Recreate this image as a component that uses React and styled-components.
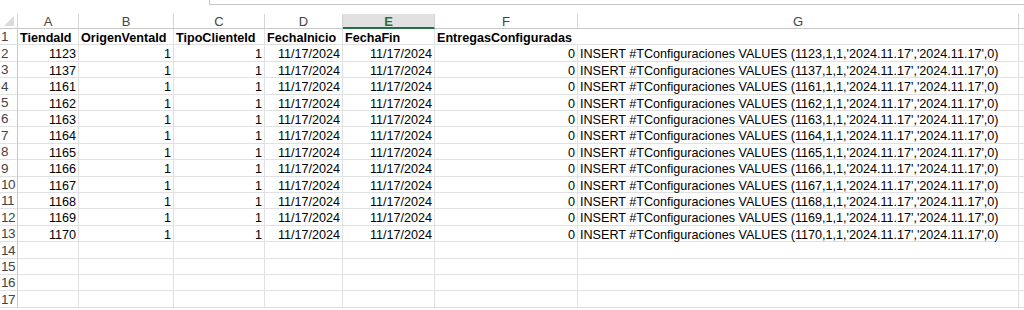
import React from 'react';
import styled, { createGlobalStyle } from 'styled-components';

/** Global styles. */

const GlobalStyle = createGlobalStyle`
	html, body {
		margin: 0;
		padding: 0;
		background: #fff;
		overflow: hidden;
	}
	body {
		font-family: 'Liberation Sans', Arial, sans-serif;
	}
`;

/** Sheet styles. */

const Sheet = styled.div`
	width: 1024px;
	height: 310px;
	overflow: hidden;
	background: #fff;
`;

const TopBar = styled.div`
	height: 14px;
	display: flex;
`;

const FormulaBox = styled.div`
	margin-left: 209px;
	flex: 1;
	height: 4px;
	border-left: 1px solid #c6c6c6;
	border-bottom: 1px solid #c6c6c6;
`;

const Row = styled.div`
	display: flex;
	height: ${props => props.h}px;
`;

const Corner = styled.div`
	position: relative;
	width: 18px;
	flex: none;
	box-sizing: border-box;
	border-right: 1px solid #d4d4d4;
	border-bottom: 1px solid #c8c8c8;

	&::after {
		content: '';
		position: absolute;
		right: 3px;
		bottom: 2px;
		width: 0;
		height: 0;
		border-left: 10px solid transparent;
		border-bottom: 10px solid #dcdcdc;
	}
`;

const ColHeader = styled.div`
	width: ${props => props.w}px;
	flex: none;
	box-sizing: border-box;
	display: flex;
	align-items: center;
	justify-content: center;
	font-size: 13px;
	line-height: 1;
	color: ${props => (props.active ? '#217346' : '#444')};
	font-weight: ${props => (props.active ? 700 : 400)};
	background: ${props => (props.active ? '#e1e1e1' : '#fff')};
	border-right: 1px solid #d4d4d4;
	border-bottom: ${props => (props.active ? '2px solid #217346' : '1px solid #c8c8c8')};
	padding-top: ${props => (props.active ? '1px' : '0')};
`;

const RowNum = styled.div`
	width: 18px;
	flex: none;
	box-sizing: border-box;
	display: flex;
	align-items: center;
	padding-left: 1px;
	font-size: 13.5px;
	color: #444;
	border-right: 1px solid #c8c8c8;
	border-bottom: 1px solid #e1e1e1;
	letter-spacing: -0.4px;
`;

const Cell = styled.div`
	width: ${props => props.w}px;
	flex: none;
	box-sizing: border-box;
	display: flex;
	align-items: center;
	justify-content: ${props => (props.right ? 'flex-end' : 'flex-start')};
	padding: 2px 2px 0 2px;
	font-size: 12.6px;
	font-weight: ${props => (props.bold ? 700 : 400)};
	color: #000;
	white-space: nowrap;
	overflow: visible;
	border-right: ${props => (props.spill ? '1px solid transparent' : '1px solid #e1e1e1')};
	border-bottom: 1px solid #e1e1e1;
`;

/** Data. */

const columns = [
	{ key: 'A', w: 61 },
	{ key: 'B', w: 95 },
	{ key: 'C', w: 91 },
	{ key: 'D', w: 78 },
	{ key: 'E', w: 92 },
	{ key: 'F', w: 143 },
	{ key: 'G', w: 441 },
	{ key: 'H', w: 80, blank: true },
];

const headers = [
	'TiendaId',
	'OrigenVentaId',
	'TipoClienteId',
	'FechaInicio',
	'FechaFin',
	'EntregasConfiguradas',
	'',
];

const tiendas = [1123, 1137, 1161, 1162, 1163, 1164, 1165, 1166, 1167, 1168, 1169, 1170];

const rowHeight = i => Math.round(29 + (i + 1) * 16.4) - Math.round(29 + i * 16.4);

function App() {
	return (
		<Sheet>
			<GlobalStyle />
			<TopBar>
				<FormulaBox />
			</TopBar>

			<Row h={15}>
				<Corner />
				{columns.map(col => (
					<ColHeader key={col.key} w={col.w} active={col.key === 'E'}>
						{col.blank ? '' : col.key}
					</ColHeader>
				))}
			</Row>

			<Row h={rowHeight(0)}>
				<RowNum>1</RowNum>
				{columns.map((col, c) => (
					<Cell key={col.key} w={col.w} bold spill={c === 5}>
						{headers[c] || ''}
					</Cell>
				))}
			</Row>

			{tiendas.map((id, i) => (
				<Row key={id} h={rowHeight(i + 1)}>
					<RowNum>{i + 2}</RowNum>
					<Cell w={61} right>{id}</Cell>
					<Cell w={95} right>1</Cell>
					<Cell w={91} right>1</Cell>
					<Cell w={78} right>11/17/2024</Cell>
					<Cell w={92} right>11/17/2024</Cell>
					<Cell w={143} right>0</Cell>
					<Cell w={441}>
						INSERT #TConfiguraciones VALUES ({id},1,1,'2024.11.17','2024.11.17',0)
					</Cell>
					<Cell w={80} />
				</Row>
			))}

			{[14, 15, 16, 17].map(n => (
				<Row key={n} h={rowHeight(n - 1)}>
					<RowNum>{n}</RowNum>
					{columns.map(col => (
						<Cell key={col.key} w={col.w} />
					))}
				</Row>
			))}
		</Sheet>
	);
}

export default App;
